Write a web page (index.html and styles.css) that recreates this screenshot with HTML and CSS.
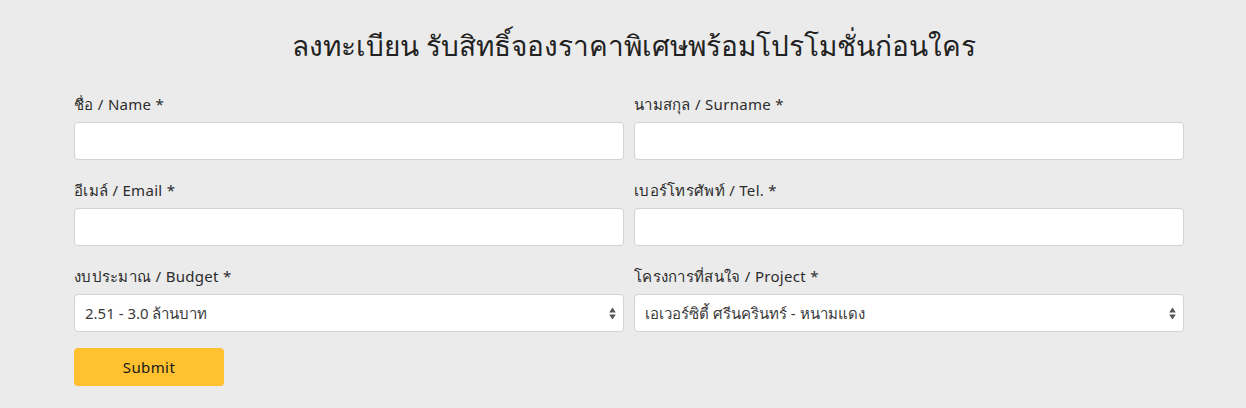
FILE: index.html
```html
<!DOCTYPE html>
<html lang="th">
<head>
<meta charset="utf-8">
<title>ลงทะเบียน</title>
<link rel="stylesheet" href="styles.css">
</head>
<body>
<div class="page">
  <h1 class="title">ลงทะเบียน รับสิทธิ์จองราคาพิเศษพร้อมโปรโมชั่นก่อนใคร</h1>
  <form class="form">
    <div class="grid">
      <div class="field">
        <label class="label">ชื่อ / Name *</label>
        <input class="control" type="text">
      </div>
      <div class="field">
        <label class="label">นามสกุล / Surname *</label>
        <input class="control" type="text">
      </div>
      <div class="field">
        <label class="label">อีเมล์ / Email *</label>
        <input class="control" type="text">
      </div>
      <div class="field">
        <label class="label">เบอร์โทรศัพท์ / Tel. *</label>
        <input class="control" type="text">
      </div>
      <div class="field">
        <label class="label">งบประมาณ / Budget *</label>
        <select class="control select">
          <option>2.51 - 3.0 ล้านบาท</option>
        </select>
      </div>
      <div class="field">
        <label class="label">โครงการที่สนใจ / Project *</label>
        <select class="control select">
          <option>เอเวอร์ซิตี้ ศรีนครินทร์ - หนามแดง</option>
        </select>
      </div>
    </div>
    <button class="submit" type="button">Submit</button>
  </form>
</div>
</body>
</html>
```
FILE: styles.css
```css
* { box-sizing: border-box; }
html, body { margin: 0; padding: 0; }
body {
  background: #ebebeb;
  font-family: "Noto Sans", "DejaVu Sans", sans-serif;
  color: #333;
}
.page {
  width: 1110px;
  margin-left: 74px;
  padding-top: 27px;
}
.title {
  margin: 0 0 29px;
  padding-left: 10px;
  text-align: center;
  font-size: 28px;
  font-weight: 400;
  line-height: 36px;
  color: #222;
}
.grid {
  display: grid;
  grid-template-columns: 1fr 1fr;
  column-gap: 10px;
  row-gap: 18px;
}
.field {
  display: flex;
  flex-direction: column;
}
.label {
  font-size: 15px;
  line-height: 24px;
  margin-bottom: 6px;
  letter-spacing: 0.3px;
  color: #2b2b2b;
}
.control {
  height: 38px;
  width: 100%;
  border: 1px solid #d0d4d9;
  border-radius: 4px;
  background: #fff;
  font-family: inherit;
  font-size: 15px;
  color: #3a3a3a;
  padding: 0 10px;
  outline: none;
}
.select {
  appearance: none;
  -webkit-appearance: none;
  background-image: url("data:image/svg+xml;utf8,<svg xmlns='http://www.w3.org/2000/svg' width='7' height='13' viewBox='0 0 7 13'><path d='M3.5 0.5 L6.8 5.5 H0.2 Z M3.5 12.5 L6.8 7.5 H0.2 Z' fill='%23555'/></svg>");
  background-repeat: no-repeat;
  background-position: right 7px center;
  background-size: 7px 13px;
}
.submit {
  margin-top: 16px;
  width: 150px;
  height: 38px;
  border: 0;
  border-radius: 4px;
  background: #ffc12f;
  color: #1a1a1a;
  font-family: inherit;
  font-size: 15px;
  font-weight: 400;
  letter-spacing: 0.4px;
}
```
